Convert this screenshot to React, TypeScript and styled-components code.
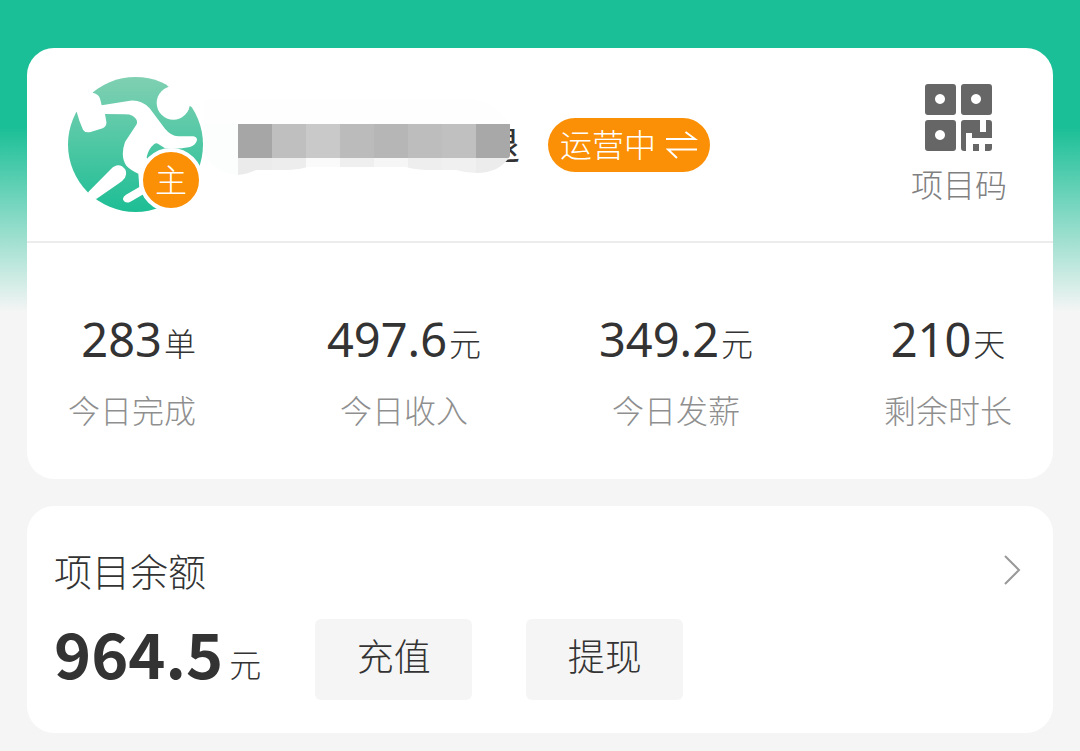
import React from "react";
import styled, { createGlobalStyle } from "styled-components";

const GlobalStyle = createGlobalStyle`
  *, *::before, *::after { box-sizing: border-box; }
  body {
    margin: 0;
    min-height: 100vh;
    color: #333333;
    font-family: "Noto Sans CJK SC", sans-serif;
    font-weight: 300;
    background: #f5f5f5 linear-gradient(to bottom, #1bbf97 0, #1bbf97 128px, #f5f5f5 312px) no-repeat;
  }
  button {
    margin: 0;
    padding: 0;
    border: 0;
    background: none;
    color: inherit;
    font: inherit;
    cursor: pointer;
  }
  svg { display: block; }
`;

const Page = styled.main`
  display: flex;
  flex-direction: column;
  gap: 27px;
  padding: 48px 27px 18px;
`;

const Card = styled.section`
  background: #ffffff;
  border-radius: 27px;
`;

const Header = styled.header`
  display: flex;
  align-items: center;
  padding: 29px 46px 29px 41px;
  border-bottom: 2px solid #ececec;
`;

const Avatar = styled.div`
  position: relative;
  width: 135px;
  height: 135px;
  flex: none;
`;

const RoleBadge = styled.span`
  position: absolute;
  right: 0;
  bottom: 0;
  display: flex;
  align-items: center;
  justify-content: center;
  width: 64px;
  height: 64px;
  padding-bottom: 4px;
  border: 4px solid #ffffff;
  border-radius: 50%;
  background: #fb8f05;
  color: #ffffff;
  font-size: 32px;
  line-height: 48px;
`;

const ProjectName = styled.h1`
  position: relative;
  display: flex;
  justify-content: flex-end;
  width: 316px;
  margin: 0 0 0 1px;
  padding-bottom: 4px;
  font-size: 38px;
  font-weight: 400;
  line-height: 56px;
`;

const NameMask = styled.svg`
  position: absolute;
  left: 0;
  bottom: -4px;
`;

const StatusButton = styled.button`
  display: flex;
  align-items: center;
  gap: 10px;
  height: 54px;
  margin-left: 28px;
  padding: 0 12px;
  border-radius: 27px;
  background: #fb8f05;
  color: #ffffff;
  font-size: 32px;
  line-height: 50px;
`;

const StatusText = styled.span`
  padding-bottom: 4px;
`;

const CodeButton = styled.button`
  display: flex;
  flex-direction: column;
  align-items: center;
  gap: 10px;
  margin-left: auto;
  color: #808080;
  font-size: 32px;
  line-height: 44px;
`;

const Stats = styled.dl`
  display: flex;
  justify-content: space-between;
  margin: 0;
  padding: 66px 41px 46px;
`;

const Stat = styled.div<{ $align?: string }>`
  display: flex;
  flex-direction: column-reverse;
  align-items: ${(p) => p.$align ?? "center"};
  gap: 16px;
  width: 128px;
`;

const StatLabel = styled.dt`
  color: #8f8f8f;
  font-size: 32px;
  line-height: 48px;
  white-space: nowrap;
`;

const Unit = styled.span`
  font-family: "Noto Sans CJK SC", sans-serif;
  font-size: 32px;
  font-weight: 300;
  line-height: 54px;
`;

const StatValue = styled.dd`
  display: flex;
  align-items: flex-end;
  gap: 2px;
  margin: 0;
  font-family: "Noto Sans", "Noto Sans CJK SC", sans-serif;
  font-size: 47px;
  font-weight: 400;
  line-height: 60px;
`;

const Balance = styled(Card)`
  padding: 34px 27px 33px;
`;

const BalanceHead = styled.div`
  display: flex;
  align-items: center;
  justify-content: space-between;
  padding-right: 5px;
`;

const BalanceTitle = styled.h2`
  margin: 0;
  font-size: 38px;
  font-weight: 300;
  line-height: 60px;
`;

const BalanceBody = styled.div`
  display: flex;
  align-items: flex-start;
  gap: 54px;
  margin-top: 19px;
`;

const Amount = styled.p`
  display: flex;
  align-items: flex-end;
  gap: 6px;
  margin: 0;
  font-size: 63px;
  font-weight: 700;
  line-height: 66px;

  ${Unit} {
    line-height: 44px;
  }
`;

const ActionButton = styled.button`
  width: 157px;
  height: 81px;
  padding-bottom: 9px;
  border-radius: 6px;
  background: #f5f5f5;
  font-size: 37px;
  line-height: 72px;
`;

const maskTiles = [
  ["#fbfefd", "#fbfefd"],
  ["#a6a6a6", "#ebebeb"],
  ["#bfbfbf", "#ededed"],
  ["#c9c9c9", "#fafafa"],
  ["#bbbbbb", "#efefef"],
  ["#b6b6b6", "#f6f6f6"],
  ["#bdbdbd", "#eeeeee"],
  ["#c0c0c0", "#f0f0f0"],
  ["#a8a8a8", "#ececec"],
];

const stats = [
  { label: "今日完成", value: "283", unit: "单", align: "flex-end" },
  { label: "今日收入", value: "497.6", unit: "元" },
  { label: "今日发薪", value: "349.2", unit: "元" },
  { label: "剩余时长", value: "210", unit: "天" },
];

const RunnerLogo = () => (
  <svg width="135" height="135" viewBox="54 50 405 405" aria-hidden="true">
    <defs>
      <linearGradient id="logoFill" x1="0" y1="0" x2="0" y2="1">
        <stop offset="0" stopColor="#80d0b2" />
        <stop offset="1" stopColor="#1dbe95" />
      </linearGradient>
    </defs>
    <circle cx="256.500" cy="252.500" r="202.500" fill="url(#logoFill)" />
    <g fill="#ffffff">
      <circle cx="370" cy="128" r="50" />
      <path d="M350 74 L370 40 L470 60 L460 150 L420 138Z" />
      <path d="M30 60 L128 60 L128 97 Q148 101 151 118 L155 135 L240 121 Q275 118 299 144 L345 205 Q362 226 385 228 L430 228 Q441 230 441 239 Q438 254 420 260 Q385 268 345 264 L324 250 Q318 247 312 252 Q296 265 290 290 L310 400 L280 402 L240 425 Q226 430 220 420 Q216 410 228 403 L268 380 L265 340 Q240 328 229 316 Q210 288 225 245 L260 192 Q265 176 247 166 Q240 162 225 162 L165 161 L169 184 Q171 198 158 204 L122 215 Q105 219 99 208 Q88 185 80 154 L40 150Z" />
      <path d="M117 393 L183 326 Q200 309 216 318 Q236 332 225 352 Q220 360 205 370 L140 415 L100 420Z" />
    </g>
  </svg>
);

const Mask = () => (
  <NameMask width="316" height="80" viewBox="0 0 316 80" aria-hidden="true">
    <defs>
      <clipPath id="maskShape">
        <path d="M0 0 H270 Q296 8 306 25 V57 Q296 74 272 74 Q262 74 252 71 L222 71 Q208 70 202 68 L104 68 Q94 71 84 71 L52 71 Q44 75 34 76 Q8 73 0 53Z" />
      </clipPath>
    </defs>
    <rect x="280" width="36" height="25" fill="#ffffff" />
    <g clipPath="url(#maskShape)">
      <rect width="316" height="25" fill="#fefefe" />
      {maskTiles.map(([top, bottom], i) => (
        <g key={i}>
          <rect x={i * 34} y="59" width="34" height="20" fill={bottom} />
          <rect x={i * 34} y="25" width="34" height="34" fill={top} />
        </g>
      ))}
    </g>
  </NameMask>
);

const SwapIcon = () => (
  <svg width="32" height="28" viewBox="0 0 32 28" fill="none" stroke="#ffffff" strokeWidth="2" aria-hidden="true">
    <path d="M0 8 H29 L19.500 1 M31 18.500 H2 L11 27" />
  </svg>
);

const CodeIcon = () => (
  <svg width="67" height="67" viewBox="0 0 67 67" fill="#666666" aria-hidden="true">
    <path
      fillRule="evenodd"
      d="M3 0H28Q31 0 31 3V28Q31 31 28 31H3Q0 31 0 28V3Q0 0 3 0ZM15 10a5 5 0 1 0 .01 0Z M39 0H64Q67 0 67 3V28Q67 31 64 31H39Q36 31 36 28V3Q36 0 39 0ZM51 10a5 5 0 1 0 .01 0Z M3 36H28Q31 36 31 39V64Q31 67 28 67H3Q0 67 0 64V39Q0 36 3 36ZM15 46a5 5 0 1 0 .01 0Z"
    />
    <path d="M39 36H55V48H61V36H64Q67 36 67 39V54H47V49H41V67H39Q36 67 36 64V39Q36 36 39 36Z M48 60H54V67H48Z M60 60H67V64Q67 67 64 67H60Z" />
  </svg>
);

const ChevronIcon = () => (
  <svg width="17" height="30" viewBox="0 0 17 30" fill="none" stroke="#999999" strokeWidth="2" aria-hidden="true">
    <path d="M1 1 L15 15 L1 29" />
  </svg>
);

export default function App() {
  return (
    <>
      <GlobalStyle />
      <Page>
        <Card>
          <Header>
            <Avatar>
              <RunnerLogo />
              <RoleBadge>主</RoleBadge>
            </Avatar>
            <ProjectName>
              退
              <Mask />
            </ProjectName>
            <StatusButton type="button">
              <StatusText>运营中</StatusText>
              <SwapIcon />
            </StatusButton>
            <CodeButton type="button">
              <CodeIcon />
              项目码
            </CodeButton>
          </Header>
          <Stats>
            {stats.map((s) => (
              <Stat key={s.label} $align={s.align}>
                <StatLabel>{s.label}</StatLabel>
                <StatValue>
                  {s.value}
                  <Unit>{s.unit}</Unit>
                </StatValue>
              </Stat>
            ))}
          </Stats>
        </Card>
        <Balance>
          <BalanceHead>
            <BalanceTitle>项目余额</BalanceTitle>
            <button type="button" aria-label="项目余额">
              <ChevronIcon />
            </button>
          </BalanceHead>
          <BalanceBody>
            <Amount>
              964.5
              <Unit>元</Unit>
            </Amount>
            <ActionButton type="button">充值</ActionButton>
            <ActionButton type="button">提现</ActionButton>
          </BalanceBody>
        </Balance>
      </Page>
    </>
  );
}
